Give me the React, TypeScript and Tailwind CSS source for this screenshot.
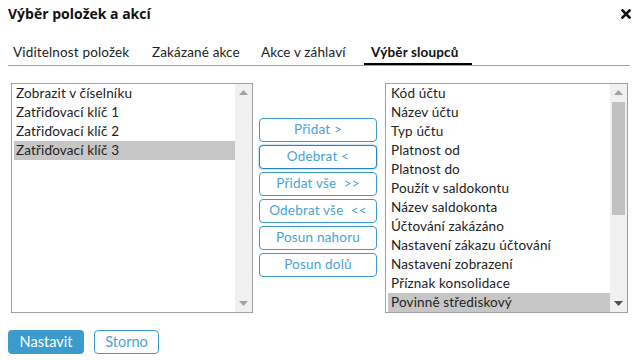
import React from "react";

const leftItems = ["Zobrazit v číselníku", "Zatřiďovací klíč 1", "Zatřiďovací klíč 2", "Zatřiďovací klíč 3"];
const rightItems = [
  "Kód účtu",
  "Název účtu",
  "Typ účtu",
  "Platnost od",
  "Platnost do",
  "Použít v saldokontu",
  "Název saldokonta",
  "Účtování zakázáno",
  "Nastavení zákazu účtování",
  "Nastavení zobrazení",
  "Příznak konsolidace",
  "Povinně střediskový",
];

function Arrow({ up, dark }: { up?: boolean; dark?: boolean }) {
  return (
    <svg width="9" height="5" viewBox="0 0 9 5" className="block">
      <polygon points={up ? "0,5 9,5 4.5,0" : "0,0 9,0 4.5,5"} fill={dark ? "#505050" : "#a3a3a3"} />
    </svg>
  );
}

function ListBox({ items, selected, scroll, textPad }: { items: string[]; selected: number; scroll?: boolean; textPad: string }) {
  return (
    <div className="flex h-[230px] border border-[#a0a0a0] bg-white">
      <div className="flex-1 pl-[2px] overflow-hidden">
        {items.map((t, i) => (
          <div
            key={t}
            className={`h-[19px] leading-[19px] text-[13.5px] tracking-[0.15px] text-[#222] whitespace-nowrap ${textPad} ${i === selected ? "bg-[#c6c6c6]" : ""}`}
          >
            {t}
          </div>
        ))}
      </div>
      <div className="w-[17px] bg-[#f0f0f0] flex flex-col items-center">
        <div className="h-[17px] flex items-center justify-center">
          <Arrow up />
        </div>
        <div className="flex-1 w-full px-[2px] pt-[1px]">
          {scroll && <div className="h-[113px] w-full bg-[#c1c1c1]" />}
        </div>
        <div className="h-[17px] flex items-center justify-center">
          <Arrow dark={scroll} />
        </div>
      </div>
    </div>
  );
}

function MidButton({ children, focus }: { children: React.ReactNode; focus?: boolean }) {
  return (
    <button
      className={`w-[118px] h-[24px] rounded-[4px] border bg-white text-[13.5px] tracking-[0.2px] text-[#4aa3d6] leading-none whitespace-pre ${
        focus ? "border-[#2f7fc4] shadow-[0_0_2px_#4a9fe0]" : "border-[#3d9bd0]"
      }`}
    >
      {children}
    </button>
  );
}

export default function App() {
  return (
    <div className="w-[640px] h-[360px] bg-white relative overflow-hidden" style={{ fontFamily: "Lato, 'Noto Sans', sans-serif" }}>
      <div className="flex items-start justify-between pl-2 pr-[9px] pt-[4px]">
        <div className="text-[14px] font-bold leading-[20px] text-[#111]" style={{ fontFamily: "'Open Sans', Lato, sans-serif" }}>
          Výběr položek a akcí
        </div>
        <svg width="10" height="10" viewBox="0 0 10 10" className="mt-[5px]">
          <path d="M1.5 1.5 L8.5 8.5 M8.5 1.5 L1.5 8.5" stroke="#111" strokeWidth="2.6" strokeLinecap="square" />
        </svg>
      </div>

      <div className="mt-[20px] ml-2 mr-[10px] flex border-b border-[#a0a0a0] text-[13.5px] tracking-[0.15px] leading-[16px] text-[#222]">
        <div className="w-[137px] pl-[5px] pb-[3px] border-b-2 border-transparent">Viditelnost položek</div>
        <div className="w-[109px] pl-[7px] pb-[3px] border-b-2 border-transparent">Zakázané akce</div>
        <div className="w-[110px] pl-[7px] pb-[3px] border-b-2 border-transparent">Akce v záhlaví</div>
        <div className="w-[108px] pl-[7px] pb-[3px] border-b-2 border-black font-bold text-[#111]">Výběr sloupců</div>
      </div>

      <div className="mt-[17px] flex items-start">
        <div className="ml-[11px] w-[242px]">
          <ListBox items={leftItems} selected={3} textPad="pl-[2px]" />
        </div>
        <div className="ml-[6px] pt-[35px] flex flex-col gap-[3px]">
          <MidButton>Přidat &gt;</MidButton>
          <MidButton focus>Odebrat &lt;</MidButton>
          <MidButton>{"Přidat vše  >>"}</MidButton>
          <MidButton>{"Odebrat vše  <<"}</MidButton>
          <MidButton>Posun nahoru</MidButton>
          <MidButton>Posun dolů</MidButton>
        </div>
        <div className="ml-[8px] w-[243px]">
          <ListBox items={rightItems} selected={11} scroll textPad="pl-[3px]" />
        </div>
      </div>

      <div className="mt-[17px] ml-2 flex gap-[10px]">
        <button className="w-[76px] h-[24px] rounded-[4px] bg-[#3a9bcc] text-white text-[14.5px] leading-none">Nastavit</button>
        <button className="w-[65px] h-[24px] rounded-[4px] border border-[#3d9bd0] bg-white text-[#4aa3d6] text-[14.5px] leading-none">Storno</button>
      </div>
    </div>
  );
}
